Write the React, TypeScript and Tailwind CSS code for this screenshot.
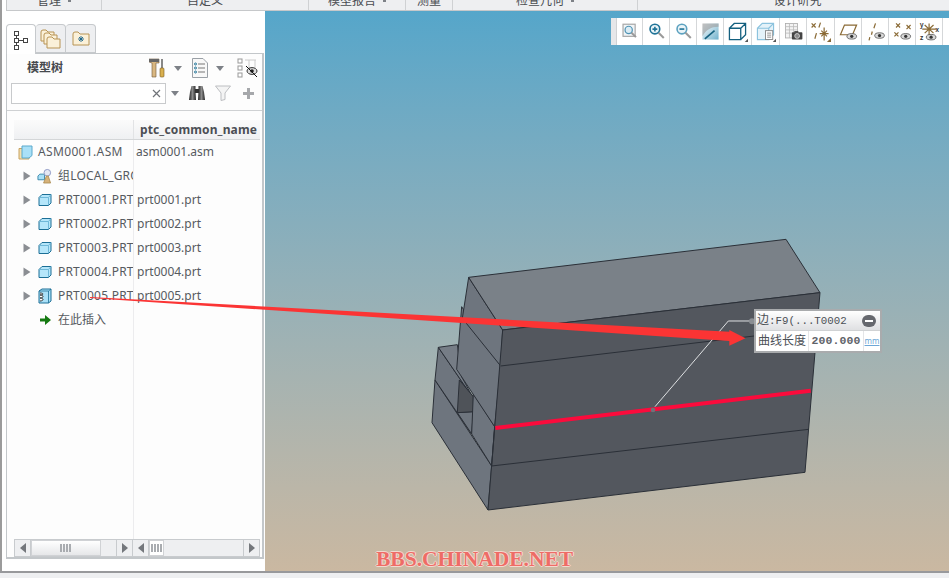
import React from "react";

const Caret = ({ className = "" }: { className?: string }) => (
  <svg width="8" height="5" viewBox="0 0 8 5" className={className}>
    <path d="M0 0H8L4 5Z" fill="#7d8187" />
  </svg>
);

const Brown = "#8a6a35";
const Eye = ({ x = 11, y = 15 }: { x?: number; y?: number }) => (
  <g>
    <ellipse cx={x} cy={y} rx="6" ry="3.4" fill="#d8d8d8" stroke="#555" strokeWidth="1" />
    <circle cx={x} cy={y} r="2" fill="#333" />
  </g>
);
const Corner = () => <path d="M26 26V22L22 26Z" fill="#555" />;

const toolIcons: React.ReactNode[] = [
  <g key="0">
    <rect x="5" y="4" width="15" height="15" fill="#f1f5f7" stroke="#a8a8a8" strokeWidth="1.5" />
    <circle cx="12" cy="11" r="4.5" fill="#dcecf4" stroke="#4f93b4" strokeWidth="1.5" />
    <path d="M15.5 14.5L21 20" stroke="#9a9a9a" strokeWidth="2.5" />
  </g>,
  <g key="1">
    <circle cx="11" cy="10" r="6" fill="#eaf4f8" stroke="#1f7397" strokeWidth="2" />
    <path d="M8 10H14M11 7V13" stroke="#1f7397" strokeWidth="2" />
    <path d="M15.5 14.5L22 21" stroke="#9a9a9a" strokeWidth="2.5" />
  </g>,
  <g key="2">
    <circle cx="11" cy="10" r="6" fill="#eaf4f8" stroke="#5da2c0" strokeWidth="2" />
    <path d="M8 10H14" stroke="#1f7397" strokeWidth="2" />
    <path d="M15.5 14.5L22 21" stroke="#9a9a9a" strokeWidth="2.5" />
  </g>,
  <g key="3">
    <defs>
      <linearGradient id="shade" x1="0" y1="0" x2="1" y2="1">
        <stop offset="0" stopColor="#ffffff" />
        <stop offset="1" stopColor="#6fb1cc" />
      </linearGradient>
    </defs>
    <rect x="3" y="3" width="20" height="20" fill="url(#shade)" />
    <path d="M3 3H23V7C14 7 7 11 3 19Z" fill="#9a9a9a" opacity="0.6" />
    <path d="M6 22L18 12" stroke="#14607f" strokeWidth="2" />
  </g>,
  <g key="4">
    <path d="M3 9H17V23H3ZM3 9L9 3H23V17L17 23M17 9L23 3" fill="#fff" stroke="#14607f" strokeWidth="1.6" />
    <Corner />
  </g>,
  <g key="5">
    <path d="M3 9H17V23H3ZM3 9L9 3H23V17L17 23M17 9L23 3" fill="#e4f2f9" stroke="#8cc3de" strokeWidth="1.4" />
    <rect x="13" y="12" width="9" height="11" fill="#fff" stroke="#777" />
    <path d="M15 15H20M15 17.5H20M15 20H20" stroke="#777" />
    <Corner />
  </g>,
  <g key="6">
    <rect x="3" y="3" width="15" height="18" fill="#f4f4f4" stroke="#aaa" />
    <path d="M3 7H18M3 11H18M3 15H18M8 3V21M13 3V21" stroke="#bbb" />
    <rect x="11" y="14" width="13" height="9" rx="1" fill="#444" />
    <rect x="14" y="12.5" width="5" height="2" fill="#444" />
    <circle cx="17.5" cy="18.5" r="3" fill="#888" stroke="#ddd" />
  </g>,
  <g key="7" stroke={Brown} strokeWidth="1.5" fill="none">
    <path d="M2 3L7 8M7 3L2 8" />
    <path d="M13 2L11 8M8 15L6 22" />
    <path d="M14 12L21 19M21 12L14 19M17.5 8V24M12 15.5H23" />
    <Corner />
  </g>,
  <g key="8">
    <path d="M3 17L8 5H23L18 17Z" fill="#fff" stroke={Brown} strokeWidth="1.5" />
    <Eye x={17} y={19} />
  </g>,
  <g key="9">
    <path d="M13 3L11 9M9 13L8 17M6 20L5 24" stroke={Brown} strokeWidth="1.5" />
    <Eye x={18} y={18} />
  </g>,
  <g key="10">
    <path d="M5 3L10 8M10 3L5 8M18 5L23 10M23 5L18 10M3 14L8 19M8 14L3 19" stroke={Brown} strokeWidth="1.5" />
    <Eye x={17} y={19} />
  </g>,
  <g key="11">
    <path d="M7 15L18 5M7 5L18 15M12.5 3V22M4 10H21" stroke={Brown} strokeWidth="1.5" />
    <text x="1" y="7" fontSize="8" fill="#333" fontFamily="'Liberation Mono', monospace" fontWeight="700">y</text>
    <text x="20" y="14" fontSize="8" fill="#333" fontFamily="'Liberation Mono', monospace" fontWeight="700">x</text>
    <text x="1" y="23" fontSize="8" fill="#333" fontFamily="'Liberation Mono', monospace" fontWeight="700">z</text>
    <Eye x={15} y={20} />
  </g>,
];

const toolWidths = ["w-[26px]", "w-[27px]", "w-[27px]", "w-[27px]", "w-[28px]", "w-[28px]", "w-[27px]", "w-[28px]", "w-[27px]", "w-[27px]", "w-[27px]", "w-[27px]"];

const TreeGlyph = () => (
  <svg width="16" height="20" viewBox="0 0 16 20" fill="#fff" stroke="#444" strokeWidth="1">
    <rect x="1.5" y="1.5" width="4" height="4" />
    <rect x="1.5" y="8.5" width="4" height="4" />
    <rect x="1.5" y="15.5" width="4" height="4" />
    <rect x="10.5" y="8.5" width="4" height="4" />
    <path d="M3.5 5.5V8.5M3.5 12.5V15.5M5.5 10.5H10.5" fill="none" />
  </svg>
);

const Folder = ({ x, y, w = 13, h = 11 }: { x: number; y: number; w?: number; h?: number }) => (
  <path
    d={`M${x} ${y + 2}Q${x} ${y} ${x + 2} ${y}H${x + 5}L${x + 7} ${y + 2}H${x + w}V${y + h}H${x}Z`}
    fill="#fbf1d9"
    stroke="#b89455"
    strokeWidth="1"
  />
);

const PartCube = () => (
  <svg width="14" height="14" viewBox="0 0 14 14">
    <path d="M1 4.5L4 1.5H13V10L10.5 12.5H1Z" fill="#b5e6fa" stroke="#1c6f96" strokeWidth="1" />
    <path d="M1.5 4.5H10.5V12M10.5 4.5L13 1.5" fill="none" stroke="#6fb8d8" strokeWidth="1" />
  </svg>
);

const SpringCube = () => (
  <svg width="14" height="16" viewBox="0 0 14 16">
    <path d="M1 3L4 1H13V13L10.5 15H1Z" fill="#a9e0f7" stroke="#1c6f96" strokeWidth="1" />
    <path d="M10.5 3V15M10.5 3L13 1M1 3H10.5" fill="none" stroke="#1c6f96" strokeWidth="0.8" />
    <path d="M2 5C6 5 6 7 2 7C6 7 6 10 2 10C6 10 6 13 2 13" fill="#fff" stroke="#333" strokeWidth="1" />
  </svg>
);

const GroupIcon = () => (
  <svg width="16" height="16" viewBox="0 0 16 16">
    <path d="M1 8L3 6H8V12H1Z" fill="#a9e0f7" stroke="#3b87aa" strokeWidth="1" />
    <circle cx="11" cy="4.5" r="3.5" fill="#e4e8f4" stroke="#8d97c4" strokeWidth="1" />
    <path d="M7 15.5L10 8H12L14.5 15.5Z" fill="#d6b27a" stroke="#a78548" strokeWidth="0.8" />
  </svg>
);

const AsmIcon = () => (
  <svg width="15" height="15" viewBox="0 0 15 15">
    <path d="M1 3.5H11V14H1Z" fill="#f3dfae" stroke="#c7a260" strokeWidth="1" />
    <path d="M4 1H14V10.5L11 13H4Z" fill="#a9e0f7" stroke="#5aa9cc" strokeWidth="1" />
  </svg>
);

const Expander = () => (
  <svg width="8" height="10" viewBox="0 0 8 10" className="ml-[9px] mr-[6px] shrink-0">
    <path d="M0.5 0.5L7.5 5L0.5 9.5Z" fill="#8b8e93" />
  </svg>
);

const rows = [
  { name: "组LOCAL_GROUP", file: "", icon: <GroupIcon /> },
  { name: "PRT0001.PRT", file: "prt0001.prt", icon: <PartCube /> },
  { name: "PRT0002.PRT", file: "prt0002.prt", icon: <PartCube /> },
  { name: "PRT0003.PRT", file: "prt0003.prt", icon: <PartCube /> },
  { name: "PRT0004.PRT", file: "prt0004.prt", icon: <PartCube /> },
  { name: "PRT0005.PRT", file: "prt0005.prt", icon: <SpringCube /> },
];

const ScrollBtn = ({ dir }: { dir: "l" | "r" }) => (
  <div className={`flex w-[16px] shrink-0 items-center justify-center border-[#c8cbce] ${dir === "l" ? "border-r" : "border-l"}`}>
    <svg width="6" height="10" viewBox="0 0 6 10">
      <path d={dir === "l" ? "M6 0V10L0 5Z" : "M0 0V10L6 5Z"} fill="#74777c" />
    </svg>
  </div>
);

const Grip = () => (
  <svg width="12" height="8" viewBox="0 0 12 8">
    <path d="M1 0V8M4 0V8M7 0V8M10 0V8" stroke="#a9acb0" strokeWidth="2" />
  </svg>
);

const sections = [
  { w: "w-[95px]", label: "管理", caret: true },
  { w: "w-[207px]", label: "自定义", caret: false },
  { w: "w-[97px]", label: "模型报告", caret: true },
  { w: "w-[47px]", label: "测量", caret: false },
  { w: "w-[185px]", label: "检查几何", caret: true },
  { w: "flex-1 pl-2", label: "设计研究", caret: false },
];

export default function App() {
  return (
    <div className="relative flex h-[578px] w-[949px] flex-col overflow-hidden bg-[#eeeff1] font-['Noto_Sans','Noto_Sans_CJK_SC',sans-serif] text-[12px] text-[#565a60]">
      <div className="flex h-[571px] flex-col border-l-2 border-[#9b9b9b] bg-white">
        {/* ribbon remainder */}
        <div className="h-[11px] shrink-0 bg-white pl-[4px]">
          <div className="flex h-[11px] border-b border-l border-[#c6c8ca] bg-[#eeeff1]">
            {sections.map((s, i) => (
              <div
                key={s.label}
                className={`flex h-[10px] items-start justify-center gap-[7px] overflow-hidden ${s.w} ${i < 5 ? "border-r border-[#cfd1d3]" : ""}`}
              >
                <span className="-mt-[5px] leading-[12px] text-[#4a4d52]">{s.label}</span>
                {s.caret && <span className="mt-0 h-[2px] w-[3px] bg-[#7d8187]" />}
              </div>
            ))}
          </div>
        </div>

        <div className="flex min-h-0 flex-1">
          {/* left panel */}
          <aside className="flex w-[263px] shrink-0 flex-col bg-white pl-[4px] pt-[13px]">
            <div className="relative z-10 flex h-[29px] items-stretch">
              <div className="flex h-[30px] w-[30px] items-center justify-center rounded-t-sm border border-b-0 border-[#c6c9cc] bg-white">
                <TreeGlyph />
              </div>
              <div className="flex h-[29px] w-[30px] items-center justify-center rounded-t-sm border border-l-0 border-[#c6c9cc] bg-[#eeeff1]">
                <svg width="22" height="22" viewBox="0 0 22 22">
                  <Folder x={1} y={2} />
                  <Folder x={4} y={5} />
                  <Folder x={7} y={9} />
                </svg>
              </div>
              <div className="flex h-[29px] w-[30px] items-center justify-center rounded-t-sm border border-l-0 border-[#c6c9cc] bg-[#eeeff1]">
                <svg width="18" height="16" viewBox="0 0 18 16">
                  <Folder x={1} y={1} w={16} h={13} />
                  <path d="M9 5V11M6 8H12M7 6L11 10M11 6L7 10" stroke="#16638a" strokeWidth="0.9" />
                </svg>
              </div>
            </div>

            <div className="flex h-[506px] w-[258px] flex-col border-b-2 border-l border-r-[2px] border-t border-[#c3c7ca] bg-[#fdfdfd]">
              {/* heading row */}
              <div className="flex h-[28px] shrink-0 items-center pl-[20px]">
                <span className="w-[38px] font-bold leading-none text-[#46494e]">模型树</span>
                <svg width="16" height="20" viewBox="0 0 16 20" className="ml-[84px]">
                  <path d="M0 1H10V5H7V19H3V5L0 4Z" fill="#d9b781" stroke="#70573a" strokeWidth="0.6" />
                  <path d="M0 1H10V4H0Z" fill="#666" />
                  <rect x="12" y="1" width="2" height="9" fill="#888" />
                  <rect x="11" y="10" width="4" height="9" rx="1" fill="#d9b04f" stroke="#7a5a20" strokeWidth="0.6" />
                </svg>
                <Caret className="ml-[9px]" />
                <svg width="16" height="20" viewBox="0 0 16 20" className="ml-[10px]">
                  <path d="M0.5 0.5H11L15.5 5V19.5H0.5Z" fill="#f8f8f8" stroke="#9aa0a6" />
                  <path d="M6 6H13M6 10H13M6 14H13" stroke="#777" />
                  <circle cx="3.5" cy="6" r="1" fill="none" stroke="#1f7397" />
                  <circle cx="3.5" cy="10" r="1" fill="none" stroke="#1f7397" />
                  <circle cx="3.5" cy="14" r="1" fill="none" stroke="#1f7397" />
                </svg>
                <Caret className="ml-[8px]" />
                <svg width="22" height="20" viewBox="0 0 22 20" className="ml-[13px]">
                  <g fill="#fff" stroke="#999" strokeWidth="1">
                    <rect x="1" y="1" width="4" height="4" />
                    <rect x="1" y="8" width="4" height="4" />
                    <rect x="1" y="15" width="4" height="4" />
                    <path d="M8 2H19M12 2V12M18 2V12" stroke="#ccc" fill="none" />
                  </g>
                  <ellipse cx="15" cy="13" rx="5" ry="3.4" fill="#ddd" stroke="#333" />
                  <circle cx="15" cy="13" r="1.8" fill="#222" />
                  <path d="M9 8L20 19" stroke="#111" strokeWidth="1" />
                </svg>
              </div>
              {/* search row */}
              <div className="flex h-[22px] shrink-0 items-center pl-[4px]">
                <div className="flex h-[21px] w-[155px] items-center justify-end border border-[#c8cacc] bg-white pr-[4px]">
                  <svg width="9" height="9" viewBox="0 0 9 9">
                    <path d="M1 1L8 8M8 1L1 8" stroke="#6f7378" strokeWidth="1.2" />
                  </svg>
                </div>
                <Caret className="ml-[5px]" />
                <svg width="16" height="16" viewBox="0 0 16 16" className="ml-[10px]">
                  <defs>
                    <linearGradient id="bino" x1="0" y1="0" x2="1" y2="0">
                      <stop offset="0" stopColor="#222" />
                      <stop offset="0.5" stopColor="#8a8a8a" />
                      <stop offset="1" stopColor="#222" />
                    </linearGradient>
                  </defs>
                  <path d="M2.5 1H6.5V7L7 15H0L1 7Z" fill="url(#bino)" />
                  <path d="M9.5 1H13.5L15 7L16 15H9L9.5 7Z" fill="url(#bino)" />
                  <rect x="6" y="4" width="4" height="4" fill="#333" />
                </svg>
                <svg width="16" height="16" viewBox="0 0 16 16" className="ml-[10px]">
                  <path d="M0.5 1H15.5L10 8V14.5L6 15.5V8Z" fill="#f4f4f4" stroke="#bcbec1" />
                </svg>
                <svg width="11" height="11" viewBox="0 0 11 11" className="ml-[12px]">
                  <path d="M4 0H7V4H11V7H7V11H4V7H0V4H4Z" fill="#a6a8ab" />
                </svg>
              </div>
              <div className="mt-[6px] h-px shrink-0 bg-[#cfd1d3]" />
              {/* table */}
              <div className="ml-[7px] mt-[9px] flex min-h-0 w-[246px] flex-1 flex-col">
                <div className="flex h-[20px] shrink-0 border-b border-[#d4d6d8] bg-gradient-to-b from-[#fbfbfb] to-[#eff0f2]">
                  <div className="w-[120px] shrink-0 border-r border-[#e2e3e5]" />
                  <div className="pl-[6px] font-bold leading-[20px] tracking-[0.13px] text-[#4b4e54]">ptc_common_name</div>
                </div>
                <div className="flex h-[24px] shrink-0 items-center">
                  <div className="flex h-full w-[120px] shrink-0 items-center gap-[5px] border-r border-[#ececee] pl-[4px]">
                    <AsmIcon />
                    <span className="tracking-[0.35px]">ASM0001.ASM</span>
                  </div>
                  <span className="pl-[2px]">asm0001.asm</span>
                </div>
                {rows.map((r) => (
                  <div key={r.name} className="flex h-[24px] shrink-0 items-center">
                    <div className="flex h-full w-[120px] shrink-0 items-center overflow-hidden whitespace-nowrap border-r border-[#ececee]">
                      <Expander />
                      <span className="flex w-[15px] shrink-0 items-center justify-center">{r.icon}</span>
                      <span className="ml-[6px] tracking-[0.2px]">{r.name}</span>
                    </div>
                    <span className="pl-[3px]">{r.file}</span>
                  </div>
                ))}
                <div className="flex h-[24px] shrink-0 items-center">
                  <div className="flex h-full w-[120px] shrink-0 items-center border-r border-[#ececee] pl-[26px]">
                    <svg width="11" height="10" viewBox="0 0 11 10">
                      <path d="M0 3.5H5V0L11 5L5 10V6.5H0Z" fill="#167a12" />
                    </svg>
                    <span className="ml-[7px]">在此插入</span>
                  </div>
                </div>
                <div className="min-h-0 flex-1">
                  <div className="mb-[2px] h-full w-[120px] border-r border-[#ececee]" />
                </div>
                <div className="flex h-[18px] shrink-0 border border-[#c8cbce] bg-[#eeeff1]">
                  <div className="flex w-[118px] shrink-0 border-r border-[#c8cbce]">
                    <ScrollBtn dir="l" />
                    <div className="flex w-[70px] items-center justify-center border border-[#d0d2d5] bg-gradient-to-b from-white to-[#e6e7e9]">
                      <Grip />
                    </div>
                    <div className="flex-1" />
                    <ScrollBtn dir="r" />
                  </div>
                  <div className="flex flex-1">
                    <ScrollBtn dir="l" />
                    <div className="flex w-[15px] items-center justify-center border border-[#d0d2d5] bg-white">
                      <Grip />
                    </div>
                    <div className="flex-1" />
                    <ScrollBtn dir="r" />
                  </div>
                </div>
              </div>
            </div>
          </aside>

          {/* graphics window */}
          <main className="relative min-w-0 flex-1 bg-gradient-to-b from-[#55a6ca] to-[#cab8a1]">
            <svg className="absolute inset-0" width="684" height="560" viewBox="0 0 684 560">
              <g transform="translate(155 219) scale(0.33333)" stroke="#2a2f37" strokeWidth="3" strokeLinejoin="round">
                <path d="M45 450L36 578L204 840L215 708Z" fill="#6e757e" />
                <path d="M55 352L45 450L155 612L160 505Z" fill="#6e757e" />
                <path d="M55 352L112 344L125 440L160 505Z" fill="#767d86" />
                <path d="M112 548L160 545L155 612Z" fill="#6e757e" />
                <path d="M118 450L112 548L160 545V500Z" fill="#4f5359" />
                <path d="M160 490L155 612L215 708L224 590Z" fill="#6e757e" />
                <path d="M110 418L125 230L242 408L224 590Z" fill="#6e757e" />
                <path d="M146 142L127 265L242 408L248 300Z" fill="#6e757e" />
                <path d="M146 142L1098 28L1200 188L248 300Z" fill="#7a8188" />
                <path d="M248 300L1200 188L1155 727L204 840Z" fill="#53575e" />
                <path d="M242 408L1188 296M215 708L1166 598M224 590L215 708" fill="none" />
                <path d="M226 594L1172 482" stroke="#fb0b3c" strokeWidth="12" />
                <path d="M705 530L925 273H995" fill="none" stroke="#dfe1e3" strokeWidth="3" />
                <circle cx="699" cy="540" r="7" fill="#6e7279" stroke="none" />
                <circle cx="996" cy="274" r="9" fill="#8b8f94" stroke="none" />
              </g>
            </svg>

            {/* view toolbar */}
            <div className="absolute right-0 top-[7px] flex h-[27px] w-[338px] bg-white">
              <div className="w-[6px] shrink-0 border-r border-[#cfd1d3] bg-[#e6e7e9]" />
              {toolIcons.map((ic, i) => (
                <div key={i} className={`flex shrink-0 items-center justify-center border-r border-[#d5d7d9] ${toolWidths[i]}`}>
                  <svg width="21" height="21" viewBox="0 0 26 26">
                    {ic}
                  </svg>
                </div>
              ))}
            </div>

            {/* measure result */}
            <div className="absolute left-[489px] top-[298px] flex h-[44px] w-[128px] flex-col border-2 border-[#a9abad] bg-white text-[#4c5056]">
              <div className="flex h-[20px] shrink-0 items-center justify-between border-b border-[#d0d2d4] bg-gradient-to-b from-white to-[#dfe0e2] pl-[1px] pr-[4px]">
                <span className="font-['Liberation_Mono','Noto_Sans_CJK_SC',monospace] text-[10.8px] leading-none">
                  <span className="text-[12px]">边</span>:F9(...T0002
                </span>
                <span className="flex h-[12px] w-[14px] items-center justify-center rounded-full bg-[#66686e]">
                  <span className="h-[2px] w-[8px] bg-white" />
                </span>
              </div>
              <div className="flex min-h-0 flex-1 items-stretch">
                <span className="flex w-[53px] items-center justify-center border-r border-[#e4e5e7] leading-none">曲线长度</span>
                <span className="flex w-[55px] items-center justify-center border-r border-[#e4e5e7] font-['Liberation_Mono',monospace] text-[11.5px] font-bold tracking-[0.1px] text-[#5f6369]">
                  200.000
                </span>
                <span className="flex flex-1 items-center justify-center text-[8px] leading-none text-[#6da6d6] underline">mm</span>
              </div>
            </div>

            {/* watermark */}
            <div className="absolute left-[111px] top-[537px] font-['Liberation_Serif',serif] text-[21.5px] font-bold leading-[22px] text-[#ee6c66] [text-shadow:1px_0_0_#f3d9cf,-1px_0_0_#f3d9cf,0_1px_0_#f3d9cf,0_-1px_0_#f3d9cf]">
              BBS.CHINADE.NET
            </div>
          </main>
        </div>
      </div>
      <div className="h-[2px] shrink-0 bg-[#98999c]" />
      <div className="flex-1 bg-[#eeeff1]" />

      {/* annotation arrow drawn over the whole page */}
      <svg className="pointer-events-none absolute left-0 top-0" width="949" height="578" viewBox="0 0 949 578">
        <path d="M90 297L729.3 331.7V330L745.5 338.3L729.3 345.7V341L90 298Z" fill="#fb3434" />
      </svg>
    </div>
  );
}
